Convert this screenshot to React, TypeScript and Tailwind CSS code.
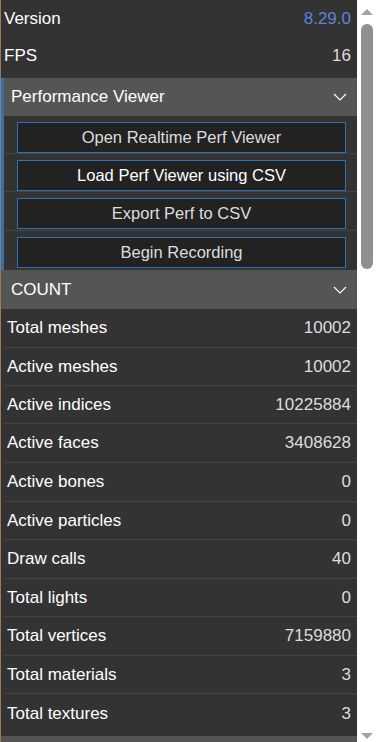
import React from "react";

const stats: [string, string, string][] = [
  ["Total meshes", "10002", "h-[39px]"],
  ["Active meshes", "10002", "h-[38px]"],
  ["Active indices", "10225884", "h-[38px]"],
  ["Active faces", "3408628", "h-[39px]"],
  ["Active bones", "0", "h-[39px]"],
  ["Active particles", "0", "h-[38px]"],
  ["Draw calls", "40", "h-[39px]"],
  ["Total lights", "0", "h-[38px]"],
  ["Total vertices", "7159880", "h-[39px]"],
  ["Total materials", "3", "h-[38px]"],
  ["Total textures", "3", "h-[39px]"],
];

const buttons: [string, string][] = [
  ["Open Realtime Perf Viewer", "h-[38px]"],
  ["Load Perf Viewer using CSV", "h-[38px]"],
  ["Export Perf to CSV", "h-[39px]"],
  ["Begin Recording", "h-[39px]"],
];

function Chevron() {
  return (
    <svg width="14" height="8" viewBox="0 0 14 8" className="mr-[10px]">
      <polyline points="1,1 7,7 13,1" fill="none" stroke="#ffffff" strokeWidth="1.2" />
    </svg>
  );
}

export default function App() {
  return (
    <div
      className="flex h-[742px] w-[376px] overflow-hidden bg-white"
      style={{ fontFamily: '"Liberation Sans", Arial, sans-serif' }}
    >
      <div className="flex w-[357px] flex-col overflow-hidden border-l border-[#a07a52] bg-[#333333] text-[17px] text-white">
        <div className="flex h-[37px] shrink-0 items-center justify-between pl-[3px] pr-[6px]">
          <span>Version</span>
          <span className="text-[#5b84d6]">8.29.0</span>
        </div>
        <div className="flex h-[37px] shrink-0 items-center justify-between pl-[3px] pr-[6px]">
          <span>FPS</span>
          <span className="text-[#dddddd]">16</span>
        </div>
        <div className="h-[4px] shrink-0" />
        <div className="flex shrink-0">
          <div className="w-[3px] shrink-0 bg-[#2b73b8]" />
          <div className="flex flex-1 flex-col">
            <div className="flex h-[38px] items-center justify-between bg-[#555555] pl-[7px]">
              <span>Performance Viewer</span>
              <Chevron />
            </div>
            {buttons.map(([b, h], i) => (
              <div
                key={b}
                className={`flex ${h} items-start pl-[13px] pr-[11px] pt-[6px] ${i < 3 ? "border-b border-solid border-[#444444]" : ""}`}
              >
                <div
                  className={`flex h-[31px] w-full items-center justify-center border border-solid border-[#2a72b5] bg-[#222222] text-[16.5px] ${i === 1 ? "text-white" : "text-[#dddddd]"}`}
                >
                  {b}
                </div>
              </div>
            ))}
          </div>
        </div>
        <div className="flex h-[39px] shrink-0 items-center justify-between bg-[#555555] pl-[10px]">
          <span>COUNT</span>
          <Chevron />
        </div>
        {stats.map(([k, v, h], i) => (
          <div
            key={k}
            className={`ml-[3px] flex ${h} shrink-0 items-center justify-between pl-[3px] pr-[6px] ${i < stats.length - 1 ? "border-b border-solid border-[#444444]" : ""}`}
          >
            <span>{k}</span>
            <span className="text-[#dddddd]">{v}</span>
          </div>
        ))}
        <div className="mt-[3px] h-[40px] shrink-0 bg-[#555555]" />
      </div>
      <div className="flex w-[19px] flex-col items-center bg-white">
        <svg width="12" height="8" viewBox="0 0 12 8" className="mt-[8px]">
          <polygon points="0,7 6,1 12,7" fill="#a3a3a3" />
        </svg>
        <div className="mt-[8px] h-[245px] w-[12px] rounded-full bg-[#8f8f8f]" />
        <div className="flex-1" />
        <svg width="12" height="8" viewBox="0 0 12 8" className="mb-[2px]">
          <polygon points="0,1 12,1 6,7" fill="#a3a3a3" />
        </svg>
      </div>
    </div>
  );
}
